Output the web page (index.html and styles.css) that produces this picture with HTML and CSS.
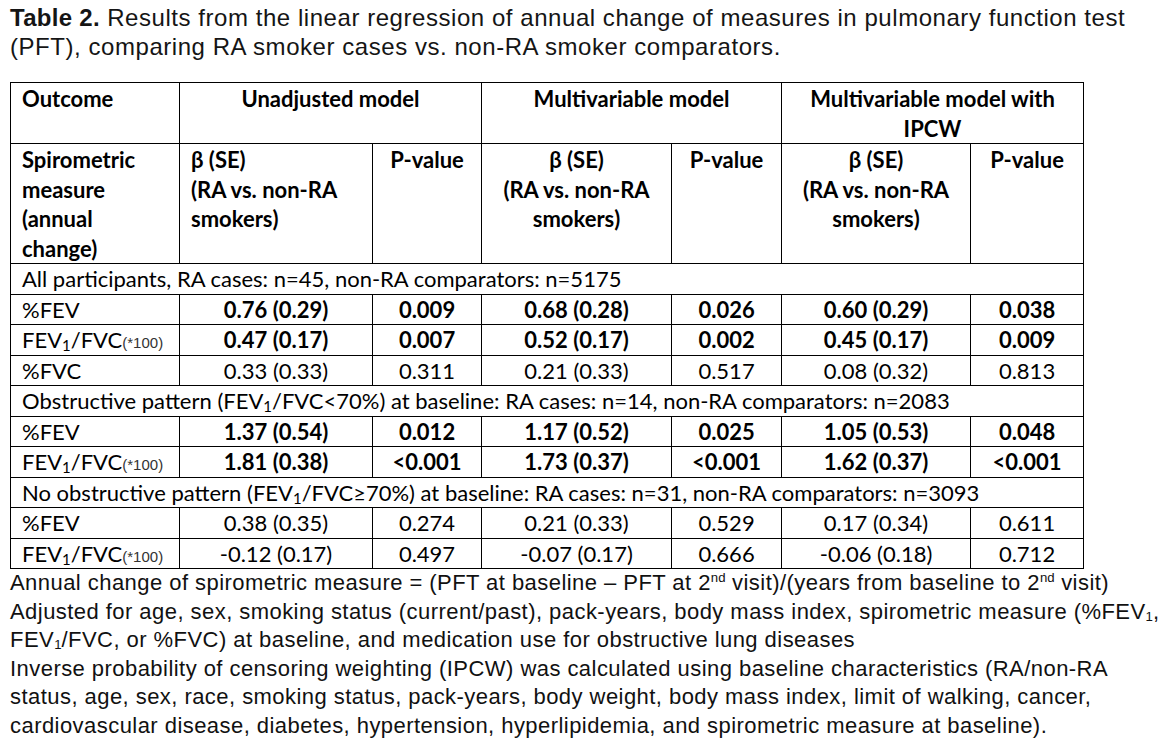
FILE: index.html
```html
<!DOCTYPE html>
<html lang="en">
<head>
<meta charset="utf-8">
<title>Table 2</title>
<link rel="stylesheet" href="styles.css">
</head>
<body>
<div class="page">
  <p class="caption"><b>Table 2.</b> Results from the linear regression of annual change of measures in pulmonary function test<br>(PFT), comparing RA smoker cases vs. non-RA smoker comparators.</p>

  <table class="results">
    <colgroup>
      <col class="c-outcome">
      <col class="c-beta1">
      <col class="c-p1">
      <col class="c-beta2">
      <col class="c-p2">
      <col class="c-beta3">
      <col class="c-p3">
    </colgroup>
    <thead>
      <tr class="head1">
        <th class="left">Outcome</th>
        <th colspan="2" class="sec">Unadjusted model</th>
        <th colspan="2" class="sec">Multivariable model</th>
        <th colspan="2" class="sec">Multivariable model with IPCW</th>
      </tr>
      <tr class="head2">
        <th class="left">Spirometric measure (annual change)</th>
        <th class="left">β (SE)<br>(RA vs. non-RA smokers)</th>
        <th>P-value</th>
        <th>β (SE)<br>(RA vs. non-RA<br>smokers)</th>
        <th>P-value</th>
        <th>β (SE)<br>(RA vs. non-RA<br>smokers)</th>
        <th>P-value</th>
      </tr>
    </thead>
    <tbody>
      <tr class="group"><td colspan="7">All participants, RA cases: n=45, non-RA comparators: n=5175</td></tr>
      <tr class="strong">
        <td class="label">%FEV</td><td>0.76 (0.29)</td><td>0.009</td><td>0.68 (0.28)</td><td>0.026</td><td>0.60 (0.29)</td><td>0.038</td>
      </tr>
      <tr class="strong">
        <td class="label">FEV<sub>1</sub>/FVC<span class="mult">(*100)</span></td><td>0.47 (0.17)</td><td>0.007</td><td>0.52 (0.17)</td><td>0.002</td><td>0.45 (0.17)</td><td>0.009</td>
      </tr>
      <tr>
        <td class="label">%FVC</td><td>0.33 (0.33)</td><td>0.311</td><td>0.21 (0.33)</td><td>0.517</td><td>0.08 (0.32)</td><td>0.813</td>
      </tr>
      <tr class="group"><td colspan="7">Obstructive pattern (FEV<sub>1</sub>/FVC&lt;70%) at baseline: RA cases: n=14, non-RA comparators: n=2083</td></tr>
      <tr class="strong">
        <td class="label">%FEV</td><td>1.37 (0.54)</td><td>0.012</td><td>1.17 (0.52)</td><td>0.025</td><td>1.05 (0.53)</td><td>0.048</td>
      </tr>
      <tr class="strong">
        <td class="label">FEV<sub>1</sub>/FVC<span class="mult">(*100)</span></td><td>1.81 (0.38)</td><td>&lt;0.001</td><td>1.73 (0.37)</td><td>&lt;0.001</td><td>1.62 (0.37)</td><td>&lt;0.001</td>
      </tr>
      <tr class="group"><td colspan="7">No obstructive pattern (FEV<sub>1</sub>/FVC≥70%) at baseline: RA cases: n=31, non-RA comparators: n=3093</td></tr>
      <tr>
        <td class="label">%FEV</td><td>0.38 (0.35)</td><td>0.274</td><td>0.21 (0.33)</td><td>0.529</td><td>0.17 (0.34)</td><td>0.611</td>
      </tr>
      <tr>
        <td class="label">FEV<sub>1</sub>/FVC<span class="mult">(*100)</span></td><td>-0.12 (0.17)</td><td>0.497</td><td>-0.07 (0.17)</td><td>0.666</td><td>-0.06 (0.18)</td><td>0.712</td>
      </tr>
    </tbody>
  </table>

  <div class="notes">
    <p>Annual change of spirometric measure = (PFT at baseline – PFT at 2<sup>nd</sup> visit)/(years from baseline to 2<sup>nd</sup> visit)</p>
    <p>Adjusted for age, sex, smoking status (current/past), pack-years, body mass index, spirometric measure (%FEV<sub>1</sub>,<br>FEV<sub>1</sub>/FVC, or %FVC) at baseline, and medication use for obstructive lung diseases</p>
    <p>Inverse probability of censoring weighting (IPCW) was calculated using baseline characteristics (RA/non-RA<br>status, age, sex, race, smoking status, pack-years, body weight, body mass index, limit of walking, cancer,<br>cardiovascular disease, diabetes, hypertension, hyperlipidemia, and spirometric measure at baseline).</p>
  </div>
</div>
</body>
</html>
```

FILE: styles.css
```css
html, body {
  margin: 0;
  padding: 0;
  background: #ffffff;
  color: #111111;
}

.page {
  padding: 4px 0 0 10px;
}

.caption {
  margin: 0;
  font-family: "Liberation Sans", Arial, sans-serif;
  font-size: 24px;
  letter-spacing: 0.55px;
  line-height: 28.5px;
  color: #151515;
}

.caption b {
  font-weight: bold;
  letter-spacing: 0.3px;
}

.results {
  margin-top: 21px;
  border-collapse: collapse;
  table-layout: fixed;
  width: 1074px;
  font-family: Lato, "Noto Sans", sans-serif;
  font-size: 22px;
  line-height: 29.5px;
  color: #000000;
}

.c-outcome { width: 169px; }
.c-beta1 { width: 193px; }
.c-p1 { width: 109px; }
.c-beta2 { width: 190px; }
.c-p2 { width: 110px; }
.c-beta3 { width: 189px; }
.c-p3 { width: 113px; }

.results th,
.results td {
  border: 1px solid #000000;
  padding: 0 11px;
  vertical-align: top;
  text-align: center;
  white-space: nowrap;
}

.results th {
  font-weight: bold;
  white-space: normal;
}

.results th.left,
.results td.label,
.results tr.group td {
  text-align: left;
}

.head1 th {
  height: 59px;
  padding-top: 1px;
}

.head2 th {
  height: 117px;
  padding-top: 1px;
}

.results td {
  height: 29.5px;
}

.results tr.strong td {
  font-weight: bold;
}

.results tr.strong td.label {
  font-weight: normal;
}

.results sub {
  font-size: 0.68em;
  vertical-align: -0.2em;
  line-height: 0;
}

.mult {
  font-family: "Liberation Sans", Arial, sans-serif;
  font-size: 15px;
  line-height: 0;
  font-weight: normal;
  color: #333333;
}

.notes {
  font-family: "Liberation Sans", Arial, sans-serif;
  font-size: 22px;
  letter-spacing: 0.45px;
  line-height: 28.6px;
  color: #111111;
}

.notes p {
  margin: 0;
}

.notes sup,
.notes sub {
  font-size: 0.6em;
  line-height: 0;
  letter-spacing: 0;
}

.notes sup {
  vertical-align: 0.6em;
}

.notes sub {
  vertical-align: -0.12em;
}
```
